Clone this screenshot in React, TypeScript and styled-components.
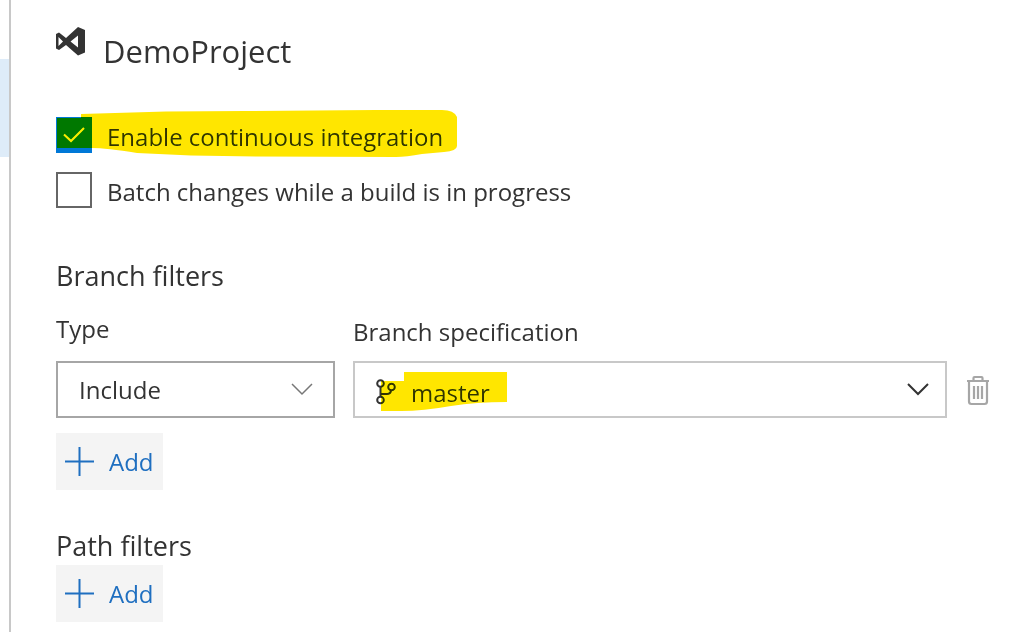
import React from "react";
import styled, { createGlobalStyle } from "styled-components";

const GlobalStyle = createGlobalStyle`
  *, *::before, *::after { box-sizing: border-box; }
  body {
    margin: 0;
    background: #fff;
    color: #333;
    font-family: "Open Sans", "Noto Sans", sans-serif;
    font-size: 24px;
  }
`;

const Page = styled.div`
  display: flex;
  min-height: 100vh;
`;

const Rail = styled.aside`
  flex: none;
  width: 11px;
  padding-top: 59px;
  border-right: 2px solid #c8c8c8;
`;

const RailSelection = styled.div`
  height: 98px;
  background: #deecf9;
`;

const Main = styled.main`
  flex: 1;
  min-width: 0;
  padding: 27px 30px 10px 45px;
`;

const Header = styled.header`
  display: flex;
  align-items: flex-start;
  gap: 17px;
`;

const Title = styled.h1`
  margin: 0;
  font-size: 31px;
  font-weight: 400;
  line-height: 48px;
`;

const CheckList = styled.div`
  display: flex;
  flex-direction: column;
  align-items: flex-start;
  gap: 15px;
  margin-top: 42px;
`;

const CheckRow = styled.div`
  position: relative;
  display: flex;
  gap: 15px;
  height: 40px;
`;

const CheckCell = styled.span`
  display: grid;
  width: 36px;
  height: 36px;
  > * { grid-area: 1 / 1; }
`;

const CheckBox = styled.input`
  appearance: none;
  width: 36px;
  height: 36px;
  margin: 0;
  border: 2px solid #666;
  background: #fff;
  &:checked { border-color: #0078d7; background: #0078d7; }
`;

const CheckMark = styled.svg`
  place-self: center;
  pointer-events: none;
`;

const CheckLabel = styled.label`
  line-height: 40px;
  white-space: nowrap;
`;

const Marker = styled.svg<{ $left: number; $top: number }>`
  position: absolute;
  left: ${(p) => p.$left}px;
  top: ${(p) => p.$top}px;
  mix-blend-mode: darken;
  pointer-events: none;
`;

const SectionTitle = styled.h2<{ $space: number }>`
  margin: ${(p) => p.$space}px 0 0;
  font-size: 27px;
  font-weight: 400;
  line-height: 38px;
`;

const FilterRow = styled.div`
  display: grid;
  grid-template-columns: 279px minmax(0, 1fr) 26px;
  align-items: end;
  column-gap: 18px;
  margin: 18px 0 15px;
`;

const Field = styled.div`
  display: flex;
  flex-direction: column;
`;

const FieldLabel = styled.label<{ $gap: number }>`
  margin-bottom: ${(p) => p.$gap}px;
  line-height: 32px;
`;

const SelectFrame = styled.div`
  position: relative;
  display: grid;
  align-items: center;
  > * { grid-area: 1 / 1; }
`;

const Select = styled.select<{ $branch?: boolean }>`
  appearance: none;
  width: 100%;
  height: 57px;
  margin: 0;
  padding: ${(p) => (p.$branch ? "6px 56px 0 56px" : "0 56px 0 21px")};
  border: 2px solid ${(p) => (p.$branch ? "#c8c8c8" : "#a6a6a6")};
  border-radius: 0;
  background: #fff;
  color: inherit;
  font: inherit;
`;

const Chevron = styled.svg<{ $inset: number }>`
  justify-self: end;
  margin-right: ${(p) => p.$inset}px;
  pointer-events: none;
`;

const BranchIcon = styled.svg`
  margin-left: 22px;
  margin-top: 4px;
  pointer-events: none;
`;

const DeleteButton = styled.button`
  display: grid;
  place-items: center;
  height: 57px;
  padding: 2px 0 0;
  border: 0;
  background: none;
  color: #a6a6a6;
`;

const AddButton = styled.button`
  display: flex;
  align-items: center;
  gap: 15px;
  height: 57px;
  padding: 0 9px;
  border: 0;
  background: #f4f4f4;
  color: #1f6fc0;
  font: inherit;
`;

function Add({ label }: { label: string }) {
  return (
    <AddButton type="button" aria-label={label}>
      <svg width="29" height="29" viewBox="0 0 29 29" fill="none" stroke="currentColor" strokeWidth="2">
        <path d="M14.5 0V29M0 14.5H29" />
      </svg>
      Add
    </AddButton>
  );
}

function Arrow({ color, weight, inset }: { color: string; weight: number; inset: number }) {
  return (
    <Chevron $inset={inset} width="24" height="16" viewBox="0 0 24 16" fill="none" stroke={color} strokeWidth={weight}>
      <path d="M2 2L12 12L22 2" />
    </Chevron>
  );
}

export default function App() {
  return (
    <>
      <GlobalStyle />
      <Page>
        <Rail>
          <RailSelection />
        </Rail>
        <Main>
          <Header>
            <svg width="30" height="29" viewBox="0 0 30 29" fill="#333" fillRule="evenodd" aria-hidden="true">
              <path d="M22 0L29 3V25.5L22 28.5L10 18L3 23L0 21.5V7L3 5.5L10 11ZM22 8.5L14.5 14.5L22 20.5ZM2.500 10V19L7 14.5Z" />
            </svg>
            <Title>DemoProject</Title>
          </Header>

          <CheckList>
            <CheckRow>
              <CheckCell>
                <CheckBox id="ci" type="checkbox" defaultChecked />
                <CheckMark width="22" height="16" viewBox="0 0 22 16" fill="none" stroke="#fff" strokeWidth="2">
                  <path d="M1 7.5L8 14L21 1" />
                </CheckMark>
              </CheckCell>
              <CheckLabel htmlFor="ci">Enable continuous integration</CheckLabel>
              <Marker $left={0} $top={-8} width="403" height="50" viewBox="0 0 403 50" fill="#ffe600">
                <path d="M25 5L110 2.5L190 2L320 1H386Q398 1 401 8V37Q401 42 388 43L366 45Q350 48 340 48L200 47.5L135 46.500L81 44Q50 39 36 39H1V9H25Z" />
              </Marker>
            </CheckRow>
            <CheckRow>
              <CheckBox id="batch" type="checkbox" />
              <CheckLabel htmlFor="batch">Batch changes while a build is in progress</CheckLabel>
            </CheckRow>
          </CheckList>

          <SectionTitle $space={45}>Branch filters</SectionTitle>
          <FilterRow>
            <Field>
              <FieldLabel htmlFor="type" $gap={16}>Type</FieldLabel>
              <SelectFrame>
                <Select id="type" defaultValue="Include">
                  <option>Include</option>
                  <option>Exclude</option>
                </Select>
                <Arrow color="#777" weight={1.5} inset={21} />
              </SelectFrame>
            </Field>
            <Field>
              <FieldLabel htmlFor="branch" $gap={13}>Branch specification</FieldLabel>
              <SelectFrame>
                <Select id="branch" $branch defaultValue="master">
                  <option>master</option>
                </Select>
                <BranchIcon width="22" height="26" viewBox="0 0 22 26" fill="none" stroke="#333" strokeWidth="2">
                  <circle cx="5.500" cy="4.500" r="3.300" />
                  <circle cx="5.500" cy="21" r="3.300" />
                  <circle cx="16.500" cy="8" r="3.300" />
                  <path d="M5.500 8V17.500M5.500 15H12Q15.500 15 16 11.500" />
                </BranchIcon>
                <Arrow color="#333" weight={2} inset={17} />
                <Marker $left={28} $top={11} width="127" height="40" viewBox="0 0 127 40" fill="#ffe600">
                  <path d="M23 0H126V30Q95 30 70 34Q42 39 20 39H0V9H23Z" />
                </Marker>
              </SelectFrame>
            </Field>
            <DeleteButton type="button" aria-label="Delete branch filter">
              <svg width="24" height="31" viewBox="0 0 24 31" fill="none" stroke="currentColor" strokeWidth="2">
                <path d="M1 6H23M7.500 6V3Q7.500 2 8.500 2H15.500Q16.500 2 16.500 3V6M3 6V26.500Q3 29 5.500 29H18.500Q21 29 21 26.500V6M8 11V24M12 11V24M16 11V24" strokeWidth="2.200" />
              </svg>
            </DeleteButton>
          </FilterRow>
          <Add label="Add branch filter" />

          <SectionTitle $space={37}>Path filters</SectionTitle>
          <Add label="Add path filter" />
        </Main>
      </Page>
    </>
  );
}
